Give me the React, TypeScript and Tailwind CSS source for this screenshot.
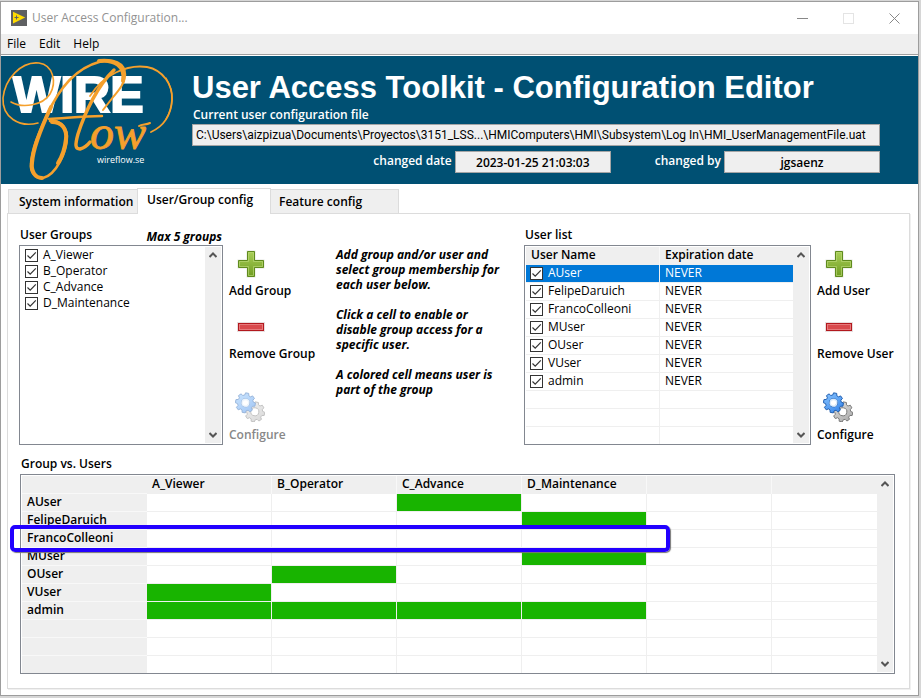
import { useState } from 'react';

const groups = ['A_Viewer', 'B_Operator', 'C_Advance', 'D_Maintenance'];

const users = ['AUser', 'FelipeDaruich', 'FrancoColleoni', 'MUser', 'OUser', 'VUser', 'admin'];

const initialMembership: Record<string, string[]> = {
  AUser: ['C_Advance'],
  FelipeDaruich: ['D_Maintenance'],
  FrancoColleoni: [],
  MUser: ['D_Maintenance'],
  OUser: ['B_Operator'],
  VUser: ['A_Viewer'],
  admin: ['A_Viewer', 'B_Operator', 'C_Advance', 'D_Maintenance'],
};

const emptyRows = [0, 1, 2];

function AppIcon() {
  return (
    <svg className="w-4 h-4" viewBox="0 0 16 16">
      <rect width="16" height="16" fill="#5f6062" />
      <path d="M2 1.8 L14.2 7.5 L2 13.4 Z" fill="#ffdb00" />
      <path d="M3.5 7.5h4M5.5 5.5v4" stroke="#5f6062" strokeWidth="1" />
    </svg>
  );
}

function Logo() {
  return (
    <svg className="w-[184px] h-32 shrink-0" viewBox="0 0 184 128" role="img" aria-label="WireFlow">
      <text
        x="12"
        y="56"
        fontFamily="'Liberation Sans', Arial, sans-serif"
        fontWeight="700"
        fontSize="50"
        fill="#fff"
        stroke="#fff"
        strokeWidth="2"
      >
        WIRE
      </text>
      <g fill="none" stroke="#f5a02c" strokeLinecap="round">
        {/* left loop */}
        <path
          d="M10 46 C22 53 42 49 49 38 C56 26 52 9 38 7 C20 5 4 23 2 42 C1 61 18 72 37 67"
          strokeWidth="1.6"
        />
        {/* long descending stroke */}
        <path
          d="M124 19 C124 7 112 2 98 6 C72 13 56 37 46 59 C39 75 31 91 30 108 C29 117 35 123 42 122 C55 119 66 96 66 80 C65 69 57 64 49 65"
          strokeWidth="2.6"
        />
        <path d="M50 51 C42 68 32 90 31 107 C30 115 34 122 41 122" strokeWidth="4" />
        <path d="M51 66 C61 66 66 73 65 83 C64 92 61 101 57 107" strokeWidth="4" />
        <path d="M124 19 C124 27 118 34 113 40 L102 54" strokeWidth="2" />
        <path d="M98 5 C113 3 125 10 122 25" strokeWidth="4" />
        {/* crossbar and tall stroke */}
        <path d="M48 63 C66 62 84 60 101 60" strokeWidth="2.4" />
        <path
          d="M113 14 C97 29 84 56 77 78 C74 89 74 93 79 93 C83 92 86 90 89 86"
          strokeWidth="3.4"
        />
        {/* right loop */}
        <path
          d="M89 40 C102 19 126 8 146 11 C162 14 172 29 171 44 C170 59 163 70 150 76"
          strokeWidth="1.8"
        />
        <path d="M165 22 C173 35 173 50 165 63" strokeWidth="1.4" />
        <path d="M138 70 C141 68 145 69 149 67" strokeWidth="2" />
      </g>
      <text
        x="89"
        y="93"
        fontFamily="'Liberation Serif', 'Times New Roman', serif"
        fontStyle="italic"
        fontSize="48"
        fill="#f5a02c"
        stroke="#f5a02c"
        strokeWidth=".8"
      >
        ow
      </text>
      <text x="96" y="107" fontFamily="'Open Sans', sans-serif" fontSize="9" fill="#fff">
        wireflow.se
      </text>
    </svg>
  );
}

function PlusIcon() {
  return (
    <svg className="w-7 h-7" viewBox="0 0 28 28">
      <defs>
        <linearGradient id="plus" x1="0" y1="0" x2="0" y2="1">
          <stop offset="0" stopColor="#a9cf57" />
          <stop offset="1" stopColor="#6f9c22" />
        </linearGradient>
      </defs>
      <path d="M9.5.5h9v9h9v9h-9v9h-9v-9h-9v-9h9z" fill="#e4e6e0" />
      <path d="M10.5 1.5h7v9h9v7h-9v9h-7v-9h-9v-7h9z" fill="url(#plus)" stroke="#5f8a1d" />
      <path d="M11.5 2.5h5v9h9v5h-9v9h-5v-9h-9v-5h9z" fill="none" stroke="#b6d673" strokeOpacity=".7" />
    </svg>
  );
}

function MinusIcon() {
  return (
    <svg className="w-7 h-7" viewBox="0 0 28 28">
      <rect x="0" y="9" width="28" height="10" fill="#e8dede" />
      <rect x="1.5" y="10.5" width="25" height="7" fill="#d94a4d" stroke="#b2181e" />
      <rect x="2.5" y="11.5" width="23" height="5" fill="none" stroke="#ea8587" strokeOpacity=".8" />
    </svg>
  );
}

const gearPath =
  'M8.4 0.5h3.2l.5 2.3 1.8.8 2-1.3 2.2 2.2-1.3 2 .8 1.8 2.3.5v3.2l-2.3.5-.8 1.8 1.3 2-2.2 2.2-2-1.3-1.8.8-.5 2.3H8.4l-.5-2.3-1.8-.8-2 1.3-2.2-2.2 1.3-2-.8-1.8-2.3-.5V8.8l2.3-.5.8-1.8-1.3-2 2.2-2.2 2 1.3 1.8-.8zM10 6.3a4 4 0 1 0 0 8 4 4 0 1 0 0-8z';

function GearsIcon({ disabled }: { disabled?: boolean }) {
  return (
    <svg className={`w-[30px] h-[30px] ${disabled ? 'opacity-45' : ''}`} viewBox="0 0 30 30">
      <defs>
        <linearGradient id="gearBlue" x1="0" y1="0" x2="1" y2="1">
          <stop offset="0" stopColor="#8cc6ff" />
          <stop offset="1" stopColor="#2f80e8" />
        </linearGradient>
        <linearGradient id="gearGray" x1="0" y1="0" x2="1" y2="1">
          <stop offset="0" stopColor="#e2e2e2" />
          <stop offset="1" stopColor="#a8a8a8" />
        </linearGradient>
      </defs>
      <g transform="translate(10 9.4) rotate(12 9.5 9.5)">
        <path d={gearPath} fill="url(#gearGray)" fillRule="evenodd" stroke="#777" strokeWidth=".9" />
      </g>
      <g transform="translate(.6 .4) rotate(10 9.5 9.5)">
        <path d={gearPath} fill="url(#gearBlue)" fillRule="evenodd" stroke="#1c5cae" strokeWidth=".9" />
        <circle cx="10" cy="10.3" r="3.3" fill="none" stroke="#d7e9fb" strokeWidth="1.4" />
      </g>
    </svg>
  );
}

function ScrollBar() {
  return (
    <div className="w-4 shrink-0 bg-[#efefef] flex flex-col justify-between">
      <button type="button" aria-label="Scroll up" className="h-4 flex items-center justify-center">
        <svg className="w-2 h-2" viewBox="0 0 8 8" fill="none" stroke="#555" strokeWidth="2">
          <path d="M.5 6 4 2.5 7.5 6" />
        </svg>
      </button>
      <button type="button" aria-label="Scroll down" className="h-4 flex items-center justify-center">
        <svg className="w-2 h-2" viewBox="0 0 8 8" fill="none" stroke="#555" strokeWidth="2">
          <path d="M.5 2 4 5.5 7.5 2" />
        </svg>
      </button>
    </div>
  );
}

function CheckItem({ label }: { label: string }) {
  return (
    <label className="flex items-center gap-[5px] leading-4">
      <span className="grid shrink-0">
        <input
          type="checkbox"
          defaultChecked
          className="peer appearance-none [grid-area:1/1] w-[13px] h-[13px] border border-[#333] bg-white"
        />
        <svg
          className="[grid-area:1/1] w-[13px] h-[13px] pointer-events-none opacity-0 peer-checked:opacity-100"
          viewBox="0 0 13 13"
          fill="none"
          stroke="#333"
          strokeWidth="1.2"
        >
          <path d="M2.5 6.5 5.2 9.2 10.8 3.4" />
        </svg>
      </span>
      {label}
    </label>
  );
}

interface ActionsProps {
  kind: string;
  configureDisabled?: boolean;
}

function Actions({ kind, configureDisabled }: ActionsProps) {
  return (
    <div className="flex flex-col items-start pt-[5px] font-semibold leading-4 whitespace-nowrap">
      <button type="button" className="flex flex-col items-start gap-[5px]">
        <span className="pl-2">
          <PlusIcon />
        </span>
        Add {kind}
      </button>
      <button type="button" className="mt-[14px] flex flex-col items-start gap-[5px]">
        <span className="pl-2">
          <MinusIcon />
        </span>
        Remove {kind}
      </button>
      <button
        type="button"
        disabled={configureDisabled}
        className="mt-[30px] flex flex-col items-start gap-[5px] disabled:text-[#888]"
      >
        <span className="pl-[6px]">
          <GearsIcon disabled={configureDisabled} />
        </span>
        Configure
      </button>
    </div>
  );
}

function UserTable() {
  const [selected, setSelected] = useState('AUser');
  const cell = 'h-[18px] p-0 align-top border-b border-[#efefef]';

  return (
    <table className="flex-1 table-fixed border-separate border-spacing-0 leading-4">
      <thead>
        <tr className="bg-[#efefef] text-left align-top">
          <th className="w-[134px] h-[18px] p-0 pl-[5px] font-semibold border-r border-[#f8f8f8]">User Name</th>
          <th className="p-0 pl-[5px] font-semibold">Expiration date</th>
        </tr>
      </thead>
      <tbody>
        {users.map((user) => (
          <tr
            key={user}
            onClick={() => setSelected(user)}
            className={user === selected ? 'bg-[#0078d7] text-white' : ''}
          >
            <td className={`${cell} border-r pl-1`}>
              <CheckItem label={user} />
            </td>
            <td className={`${cell} pl-[5px]`}>NEVER</td>
          </tr>
        ))}
        {emptyRows.map((row) => (
          <tr key={row}>
            <td className={`${cell} border-r`} />
            <td className={cell} />
          </tr>
        ))}
      </tbody>
    </table>
  );
}

function MembershipTable() {
  const [membership, setMembership] = useState(initialMembership);

  const toggle = (user: string, group: string) => {
    const current = membership[user];
    const next = current.includes(group) ? current.filter((g) => g !== group) : [...current, group];
    setMembership({ ...membership, [user]: next });
  };

  const cell = 'h-[18px] p-0 border-b border-r border-[#efefef]';
  const rowHead =
    'h-[18px] p-0 pl-[5px] align-top border-b border-[#f8f8f8] bg-[#efefef] text-left font-semibold';

  return (
    <table className="flex-1 table-fixed border-separate border-spacing-0 leading-4">
      <thead>
        <tr className="bg-[#efefef] text-left align-top">
          <th className="w-[125px] h-[18px] p-0 border-b border-[#f8f8f8]" />
          {groups.map((group) => (
            <th key={group} className="w-[125px] p-0 pl-[5px] font-semibold border-r border-[#f8f8f8]">
              {group}
            </th>
          ))}
          <th className="w-[125px] p-0 border-r border-[#f8f8f8]" />
          <th className="p-0" />
        </tr>
      </thead>
      <tbody>
        {users.map((user) => (
          <tr key={user}>
            <th scope="row" className={rowHead}>
              {user}
            </th>
            {groups.map((group) => {
              const member = membership[user].includes(group);
              return (
                <td key={group} className={cell}>
                  <button
                    type="button"
                    aria-label={`${user} in ${group}`}
                    aria-pressed={member}
                    onClick={() => toggle(user, group)}
                    className={`block w-full h-[17px] ${member ? 'bg-[#18b400]' : ''}`}
                  />
                </td>
              );
            })}
            <td className={cell} />
            <td className={`${cell} border-r-0`} />
          </tr>
        ))}
        {emptyRows.map((row) => (
          <tr key={row}>
            <th className={rowHead} />
            {groups.map((group) => (
              <td key={group} className={cell} />
            ))}
            <td className={cell} />
            <td className={`${cell} border-r-0`} />
          </tr>
        ))}
      </tbody>
    </table>
  );
}

export default function App() {
  const field = 'border border-[#a5a5a5] bg-[#efefef] text-black h-[22px] outline-none';

  return (
    <div className="bg-[#d6d6d6] pt-px pr-[2px] pb-[2px] text-xs text-black font-['Open_Sans','Noto_Sans',sans-serif]">
      <div className="border border-[#9d9d9d] bg-white">
        {/* Title bar */}
        <header className="h-8 flex items-center justify-between pl-[10px] pr-[18px] text-[#929292]">
          <div className="flex items-center gap-[5px]">
            <AppIcon />
            User Access Configuration...
          </div>
          <div className="flex items-center gap-[35px]">
            <button type="button" aria-label="Minimize">
              <svg className="w-[11px] h-[11px]" viewBox="0 0 11 11" stroke="#888">
                <path d="M0 5.5h11" />
              </svg>
            </button>
            <button type="button" aria-label="Maximize" disabled>
              <svg className="w-[11px] h-[11px]" viewBox="0 0 11 11" fill="none" stroke="#e4e4e4">
                <rect x=".5" y=".5" width="10" height="10" />
              </svg>
            </button>
            <button type="button" aria-label="Close">
              <svg className="w-[11px] h-[11px]" viewBox="0 0 11 11" stroke="#888">
                <path d="M.5.5l10 10M10.5.5l-10 10" />
              </svg>
            </button>
          </div>
        </header>

        <nav className="h-[21px] flex items-center gap-[13px] pl-[6px] pb-px bg-[#efefef] border-b border-[#a0a0a0]">
          <button type="button">File</button>
          <button type="button">Edit</button>
          <button type="button">Help</button>
        </nav>

        {/* Banner */}
        <section className="mt-px h-32 flex bg-[#005073] text-white">
          <Logo />
          <div className="flex-1 pl-[7px] pr-[38px] pt-[14px]">
            <h1 className="font-['Liberation_Sans',Arial,sans-serif] font-bold text-[31px] leading-9 whitespace-nowrap">
              User Access Toolkit - Configuration Editor
            </h1>
            <label htmlFor="file" className="block pl-px leading-[18px] font-semibold">
              Current user configuration file
            </label>
            <input
              id="file"
              readOnly
              value="C:\Users\aizpizua\Documents\Proyectos\3151_LSS...\HMIComputers\HMI\Subsystem\Log In\HMI_UserManagementFile.uat"
              className={`${field} block w-full px-[3px] font-[Roboto,sans-serif]`}
            />
            <div className="mt-[5px] flex justify-end items-start font-semibold">
              <label htmlFor="date" className="pr-[3px] leading-5">
                changed date
              </label>
              <input id="date" readOnly value="2023-01-25 21:03:03" className={`${field} w-[156px] text-center`} />
              <label htmlFor="author" className="pl-[44px] pr-[3px] leading-5">
                changed by
              </label>
              <input id="author" readOnly value="jgsaenz" className={`${field} w-[156px] text-center`} />
            </div>
          </div>
        </section>

        <main className="pl-[6px] pr-2 pt-1 pb-[6px]">
          <div role="tablist" className="flex items-end pl-px font-semibold leading-4">
            <button
              type="button"
              role="tab"
              className="w-[129px] h-6 pl-[10px] text-left bg-[#efefef] border-t border-l border-[#dcdcdc]"
            >
              System information
            </button>
            <button
              type="button"
              role="tab"
              aria-selected="true"
              className="relative z-10 w-[134px] h-[26px] -mb-px pl-[9px] pb-1 text-left bg-white border border-b-0 border-[#dcdcdc]"
            >
              User/Group config
            </button>
            <button
              type="button"
              role="tab"
              className="w-[128px] h-6 pl-2 text-left bg-[#efefef] border-t border-r border-[#dcdcdc]"
            >
              Feature config
            </button>
          </div>

          <div className="border border-[#dcdcdc] pl-[11px] pr-[14px] pt-[13px] pb-[14px] shadow-[1px_1px_0_#f0f0f0]">
            <div className="flex">
              <section className="w-[204px]">
                <div className="h-[18px] px-px flex justify-between font-semibold leading-4">
                  <h2>User Groups</h2>
                  <em className="pt-[2px] font-bold">Max 5 groups</em>
                </div>
                <div className="h-[200px] flex border border-[#828790] p-px">
                  <ul className="flex-1 pl-1">
                    {groups.map((group) => (
                      <li key={group}>
                        <CheckItem label={group} />
                      </li>
                    ))}
                  </ul>
                  <ScrollBar />
                </div>
              </section>

              <div className="w-[113px] pl-[6px] pt-[18px]">
                <Actions kind="Group" configureDisabled />
              </div>

              <div className="flex-1 pt-5 font-bold italic leading-[15px] whitespace-nowrap">
                <p>
                  Add group and/or user and
                  <br />
                  select group membership for
                  <br />
                  each user below.
                </p>
                <p className="mt-[15px]">
                  Click a cell to enable or
                  <br />
                  disable group access for a
                  <br />
                  specific user.
                </p>
                <p className="mt-[15px]">
                  A colored cell means user is
                  <br />
                  part of the group
                </p>
              </div>

              <section className="w-[287px]">
                <h2 className="h-[18px] px-px font-semibold leading-4">User list</h2>
                <div className="h-[200px] flex border border-[#828790] p-px overflow-hidden">
                  <UserTable />
                  <ScrollBar />
                </div>
              </section>

              <div className="w-[84px] pl-[6px] pt-[18px]">
                <Actions kind="User" />
              </div>
            </div>

            <section className="mt-[11px] ml-px">
              <h2 className="h-[18px] pl-px font-semibold leading-4">Group vs. Users</h2>
              <div className="relative">
                <div className="h-[200px] flex border border-[#828790] p-px overflow-hidden">
                  <MembershipTable />
                  <ScrollBar />
                </div>
                {/* Row highlight drawn over the table */}
                <div className="absolute -left-[10px] top-[51px] w-[660px] h-[27px] border-4 border-[#2200ff] rounded-[5px] shadow-[1px_1px_1px_#777] pointer-events-none" />
              </div>
            </section>
          </div>
        </main>
      </div>
    </div>
  );
}
